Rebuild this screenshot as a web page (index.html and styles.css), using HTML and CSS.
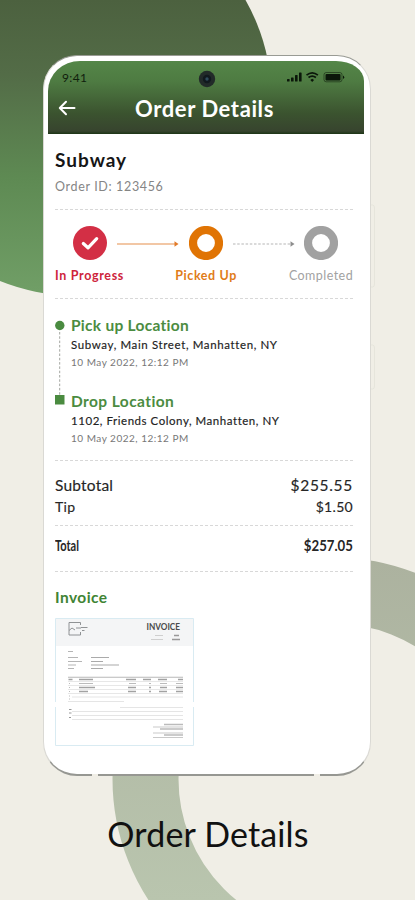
FILE: index.html
```html
<!DOCTYPE html>
<html lang="en">
<head>
<meta charset="utf-8">
<title>Order Details</title>
<link rel="stylesheet" href="styles.css">
</head>
<body>
<div class="poster">
  <svg class="backdrop" width="415" height="900" viewBox="0 0 415 900" aria-hidden="true">
    <defs>
      <linearGradient id="disc" gradientUnits="userSpaceOnUse" x1="0" y1="0" x2="0" y2="296">
        <stop offset="0" stop-color="#4c613f"/><stop offset=".25" stop-color="#536c47"/><stop offset=".6" stop-color="#5e8a53"/><stop offset="1" stop-color="#719f67"/>
      </linearGradient>
      <linearGradient id="ring" gradientUnits="userSpaceOnUse" x1="0" y1="560" x2="0" y2="900">
        <stop offset="0" stop-color="#acb29f"/><stop offset="1" stop-color="#b9c5ae"/>
      </linearGradient>
    </defs>
    <circle cx="74" cy="98" r="197.500" fill="url(#disc)"/>
    <circle cx="334" cy="779" r="188.500" fill="none" stroke="url(#ring)" stroke-width="66"/>
    <path d="M371 205h1.500q2 0 2 3v76q0 3-2 3H371M371 345h1.500q2 0 2 3v38q0 3-2 3H371" fill="#f0eee6" stroke="#e6e5dc"/>
  </svg>
  <main class="phone">
    <header class="header">
      <div class="status">
        <span class="time">9:41</span>
        <svg class="camera" width="18" height="18" viewBox="0 0 18 18"><circle cx="9" cy="9" r="8.200" fill="#222a29"/><circle cx="9" cy="9" r="4.200" fill="#11191e"/><circle cx="9" cy="9" r="1.700" fill="#304b5c"/></svg>
        <svg class="signals" width="60" height="12" viewBox="0 0 60 12">
          <g fill="#0b170a"><rect x="1" y="8" width="2.600" height="2.500" rx=".6"/><rect x="5" y="6.500" width="2.600" height="4" rx=".6"/><rect x="9" y="4" width="2.600" height="6.500" rx=".6"/><rect x="13" y="1.500" width="2.600" height="9" rx=".6"/>
          <rect x="39.500" y="3" width="15" height="6.500" rx="1"/><path d="M57 4.500v3.500q1.200-.4 1.200-1.750T57 4.500"/><path d="m26.200 7.800 1.900 1.100-1.900 2-1.900-2z"/></g>
          <g fill="none" stroke="#0b170a"><path d="M20.500 4.200q5.700-4.600 11.400 0M22.500 6.500q3.700-2.900 7.400 0" stroke-width="1.700"/><rect x="38" y="1.500" width="18" height="9.300" rx="2.200" stroke-width=".8" opacity=".65"/></g>
        </svg>
      </div>
      <div class="bar">
        <svg class="back" width="18" height="16" viewBox="0 0 18 16"><path d="M16.500 8H2M8 1.800 1.800 8 8 14.200" fill="none" stroke="#fff" stroke-width="2" stroke-linecap="round" stroke-linejoin="round"/></svg>
        <h1>Order Details</h1>
      </div>
    </header>
    <section class="store">
      <h2>Subway</h2>
      <p>Order ID: 123456</p>
    </section>
    <section class="steps">
      <div class="step red">
        <svg width="34" height="34" viewBox="0 0 34 34"><circle cx="17" cy="17" r="17" fill="#d32f45"/><path d="m10.300 17.500 4.700 4.300 8.700-9.200" fill="none" stroke="#fff" stroke-width="3.200" stroke-linecap="round" stroke-linejoin="round"/></svg>
        <span>In Progress</span>
      </div>
      <svg class="arrow first" width="64" height="8" viewBox="0 0 64 8"><path d="M1 4h59" stroke="#e5904d" stroke-width="1.200"/><path d="m58.500 1.300 4 2.700-4 2.700z" fill="#e27a28"/></svg>
      <div class="step orange">
        <svg width="34" height="34" viewBox="0 0 34 34"><circle cx="17" cy="17" r="13" fill="none" stroke="#e07404" stroke-width="8.200"/></svg>
        <span>Picked Up</span>
      </div>
      <svg class="arrow second" width="64" height="8" viewBox="0 0 64 8"><path d="M1 4h57" stroke="#b5b5b5" stroke-width="1.200" stroke-dasharray="2.500 1.700"/><path d="m58.500 1.300 4 2.700-4 2.700z" fill="#8d8d8d"/></svg>
      <div class="step gray">
        <svg width="34" height="34" viewBox="0 0 34 34"><circle cx="17" cy="17" r="13" fill="none" stroke="#a1a1a1" stroke-width="8.200"/></svg>
        <span>Completed</span>
      </div>
    </section>
    <section class="route">
      <svg class="track" width="10" height="90" viewBox="0 0 10 90"><path d="M4.700 12v64" stroke="#a3a6a0" stroke-dasharray="2.500 1.800"/><circle cx="4.800" cy="5.500" r="4.700" fill="#4a8b40"/><path d="M0 75h9.500v9.500H0z" fill="#4a8b40"/></svg>
      <div class="stops">
        <div class="stop">
          <h3 class="pick">Pick up Location</h3>
          <p class="address">Subway, Main Street, Manhatten, NY</p>
          <p class="date">10 May 2022, 12:12 PM</p>
        </div>
        <div class="stop">
          <h3 class="drop">Drop Location</h3>
          <p class="address colony">1102, Friends Colony, Manhatten, NY</p>
          <p class="date">10 May 2022, 12:12 PM</p>
        </div>
      </div>
    </section>
    <section class="charges">
      <div class="row subtotal"><span>Subtotal</span><span class="amount">$255.55</span></div>
      <div class="row tip"><span>Tip</span><span>$1.50</span></div>
    </section>
    <section class="total row"><span class="narrow">Total</span><span class="narrow sum">$257.05</span></section>
    <section class="invoice">
      <h3>Invoice</h3>
      <svg width="139" height="128" viewBox="0 0 139 128">
        <path d="M.5.500h138v127H.500z" fill="#fff" stroke="#d9ebf2"/>
        <path d="M1 1h137v27H1z" fill="#f4f5f6"/>
        <path d="M25.500 7V4.500H14v12.500h11.500v-3M14 12.500l3-2.500 3 2M21 10h5M26 9.500h6.500M27 12.500h2.500" fill="none" stroke="#85888a" stroke-width=".9"/>
        <text x="91.500" y="12" class="doc-title" textLength="33.500" lengthAdjust="spacingAndGlyphs">INVOICE</text>
        <g stroke="#b5b5b5" stroke-width="1" fill="none">
          <path d="M100 17.500h8M96 21.500h12" opacity=".6"/><path d="M119 17.500h5M117 21.500h8" stroke="#999" stroke-width="1.500"/>
          <path d="M13 33.500h5M13 39.500h10M13 43.500h14M13 47h8M13 50.500h6"/><path d="M36 39.500h18M36 43.500h12M36 47h28M36 50.500h12" stroke="#aaa" stroke-width="1.200"/>
          <path d="M13 59.500h115M13 63.500h115M13 67.500h115M13 71.500h115M13 75.500h115" stroke="#ddd" stroke-width=".7"/>
          <path d="M13 59.200h115" stroke="#aaa" stroke-width=".7"/>
          <path d="M13.500 61.500h4M24 61.500h14M71 61.500h10M88 61.500h8M103 61.500h9M123 61.500h5M24 69.500h16M73 69.500h8M94 69.500h2M105 69.500h7M121 69.500h7M24 73.500h9M73 73.500h8M94 73.500h2M104 73.500h8M121 73.500h7" stroke="#a2a2a2" stroke-width="1.300"/>
          <path d="M24 65.500h14M74 65.500h7M94 65.500h2M105 65.500h7M121 65.500h7M14 65.500h1M14 69.500h1M14 73.500h1M14 78h1M14 81h1" stroke="#bbb"/>
          <path d="M17 79h111M13 83.500h56M65 89.500h63M17 93.500h111M17 97.500h111M17 101.500h111" stroke="#e5e5e5"/>
          <path d="M14 91.500h2.500M14 95h2.500M14 99.500h2" stroke="#999"/>
          <path d="M109 106.500h19M105 111h23M109 117h19" stroke="#bbb" stroke-width="1.300"/><path d="M98 109h30M98 115h30M98 119.500h30" stroke="#bbb" stroke-width=".8"/>
        </g>
        <path d="M0 84h139v5H0z" fill="#fff"/>
      </svg>
    </section>
  </main>
  <p class="caption">Order Details</p>
</div>
</body>
</html>
```
FILE: styles.css
```css
* { box-sizing: border-box; }
body { margin: 0; background: #f0eee6; font-family: Lato, "Liberation Sans", sans-serif; font-variant-ligatures: none; }
h1, h2, h3, p { margin: 0; white-space: nowrap; }
svg { display: block; flex: none; }
span { white-space: nowrap; }

.poster { position: relative; width: 415px; height: 900px; overflow: hidden; padding: 55px 44px 0 43px; }
.backdrop { position: absolute; inset: 0; }
.phone {
  position: relative; height: 721px; padding: 6px 7px 0 5px;
  background: #fff; border: 1px solid #dad9d4; border-top-color: #999b94; border-bottom: 2px solid #969792;
  border-radius: 34px; display: flex; flex-direction: column;
}
/* antenna gaps in the metal frame */
.phone::before, .phone::after { content: ""; position: absolute; bottom: -2px; width: 6px; height: 2px; background: #f0eee6; }
.phone::before { left: 48px; }
.phone::after { right: 50px; }
.phone > section { margin: 0 10px 0 6px; flex: none; }

.header { height: 73px; width: 316px; margin: -1px 0 0 -1px; border-radius: 32px 28px 0 0 / 30px 20px 0 0; background: linear-gradient(#548648, #4e7b42 28%, #3b532f 72%, #37442e 96%, #1c3515); flex: none; }
.status { height: 31px; display: flex; align-items: center; padding: 4px 18px 0 14px; }
.time { width: 136px; font-size: 12px; letter-spacing: .4px; color: #10200d; margin-top: -3px; }
.signals { margin-left: auto; margin-top: -4px; }
.bar { height: 32px; display: flex; align-items: center; padding-left: 10px; }
.bar h1 { margin-left: 59px; font-size: 22px; line-height: 30px; letter-spacing: .6px; font-weight: 700; color: #fff; position: relative; top: 1px; }

.store { height: 75px; padding-top: 14px; }
.store h2 { font-size: 19px; line-height: 24px; letter-spacing: 1px; color: #161616; }
.store p { margin-top: 7px; font-size: 12.500px; line-height: 16px; letter-spacing: .65px; color: #858585; }

.steps, .route, .charges, .total, .invoice {
  background: repeating-linear-gradient(90deg, #d8d8d8 0 3px, transparent 3px 5px) top / 100% 1px no-repeat;
}
.steps { height: 89px; display: flex; align-items: flex-start; padding-top: 17px; }
.step { display: flex; flex-direction: column; align-items: center; font-size: 12.500px; line-height: 16px; font-weight: 700; flex: none; }
.step span { margin-top: 8px; }
.red { width: 69px; color: #ce243c; letter-spacing: .65px; }
.orange { width: 62px; color: #df7c18; margin-left: -5px; letter-spacing: .6px; }
.gray { width: 64px; color: #a2a2a2; margin-left: -7px; font-weight: 400; letter-spacing: .45px; }
.arrow { margin-top: 14px; }
.first { margin-left: -8px; }
.second { margin-left: -5px; }

.route { height: 162px; display: flex; padding-top: 17px; gap: 6px; }
.track { margin-top: 5px; }
.stop { height: 76px; }
.stop h3 { font-size: 15.500px; line-height: 20px; color: #4b8c41; }
.pick { letter-spacing: .28px; }
.drop { letter-spacing: .42px; }
.address { margin-top: 1px; font-size: 11.500px; line-height: 17px; color: #222; letter-spacing: .62px; -webkit-text-stroke: .15px #222; }
.colony { letter-spacing: .54px; }
.date { margin-top: 1px; font-size: 10px; line-height: 16px; letter-spacing: .5px; color: #777; }

.charges { height: 65px; padding-top: 14px; }
.row { display: flex; justify-content: space-between; color: #262626; }
.subtotal { font-size: 15.500px; line-height: 22px; letter-spacing: .2px; }
.amount { letter-spacing: .7px; }
.subtotal span, .tip span { -webkit-text-stroke: .15px; }
.tip { font-size: 14px; line-height: 22px; letter-spacing: .3px; }
.total { height: 46px; padding-top: 11px; font-size: 14.500px; line-height: 20px; }
.narrow { transform: scaleX(.76); transform-origin: left; font-weight: 700; }
.sum { transform: scaleX(.91); transform-origin: right; }

.invoice { height: 180px; padding-top: 15px; }
.invoice h3 { font-size: 15.500px; line-height: 22px; letter-spacing: .45px; color: #3f8434; }
.invoice svg { margin-top: 10px; }
.doc-title { font: 700 8.500px Lato, sans-serif; fill: #4a4a4a; }

.caption { position: relative; margin-top: 36px; padding-left: 2px; text-align: center; font-size: 34px; line-height: 44px; letter-spacing: .15px; color: #111; }
```
